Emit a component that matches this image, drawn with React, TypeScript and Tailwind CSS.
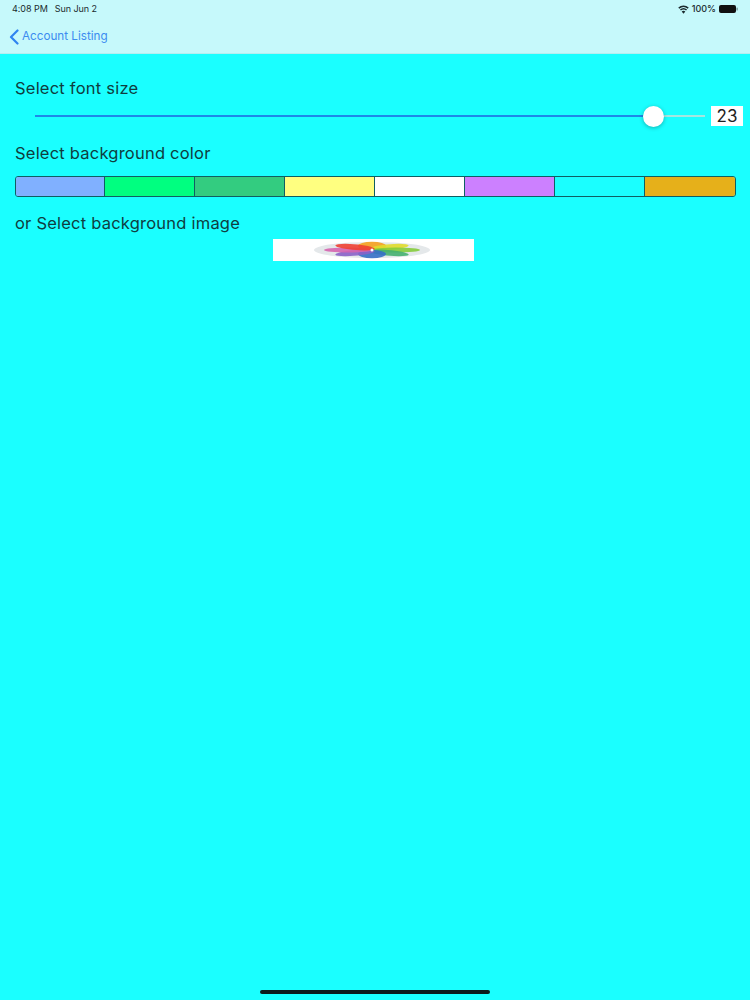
const swatches = [
  "w-[88px] bg-[#80b0ff]",
  "w-[90px] border-l bg-[#00ff80]",
  "w-[90px] border-l bg-[#33cc80]",
  "w-[90px] border-l bg-[#ffff80]",
  "w-[90px] border-l bg-white",
  "w-[90px] border-l bg-[#cc80ff]",
  "w-[90px] border-l bg-[#1affff]",
  "flex-1 border-l bg-[#e6b01a]",
];

const petals = [
  { angle: 0, color: "#f5a01f" },
  { angle: 45, color: "#e0dc2c" },
  { angle: 90, color: "#85cc3c" },
  { angle: 135, color: "#45b070" },
  { angle: 180, color: "#3570c8" },
  { angle: 225, color: "#8a62c8" },
  { angle: 270, color: "#d564b0" },
  { angle: 315, color: "#ee4032" },
];

export default function App() {
  return (
    <div className="relative w-[750px] h-[1000px] overflow-hidden bg-[#1affff] font-['Inter',sans-serif] text-[#0f3d40]">
      {/* Status + nav bar */}
      <header className="h-[54px] bg-[#c6f9fb] border-b border-[#b5eef0]">
        <div className="h-[18px] pl-3 pr-[12px] flex items-center justify-between text-[9px] text-[#1b2b2e]">
          <div className="flex gap-[7px] tracking-[-0.05px]">
            <span>4:08 PM</span>
            <span>Sun Jun 2</span>
          </div>
          <div className="flex items-center gap-[3px] font-medium">
            <svg width="11" height="9" viewBox="0 0 12 9" fill="#1b2b2e">
              <path d="M6 9 L4 6.6 A3.2 3.2 0 0 1 8 6.6 Z" />
              <path d="M3.2 5.7 L2.1 4.4 A6 6 0 0 1 9.9 4.4 L8.8 5.7 A4.4 4.4 0 0 0 3.2 5.7 Z" />
              <path d="M1.4 3.6 L0.3 2.3 A8.8 8.8 0 0 1 11.7 2.3 L10.6 3.6 A7.2 7.2 0 0 0 1.4 3.6 Z" />
            </svg>
            <span>100%</span>
            <svg width="19" height="8" viewBox="0 0 19 8">
              <rect x="0" y="0" width="17" height="8" rx="2" fill="#111" />
              <rect x="17.5" y="2.5" width="1.2" height="3" rx="0.6" fill="#6b8a8c" />
            </svg>
          </div>
        </div>
        <a className="ml-[9px] mt-[10px] flex items-center gap-[3px] text-[11.7px] text-[#3c8cf0]">
          <svg width="10" height="16" viewBox="0 0 10 16" fill="none" stroke="#2f84f0" strokeWidth="2.2" strokeLinecap="round" strokeLinejoin="round">
            <path d="M8.5 1.5 L2 8 L8.5 14.5" />
          </svg>
          Account Listing
        </a>
      </header>

      <main className="px-[15px]">
        <p className="mt-[24px] text-[16.5px] leading-5 tracking-[0.22px]">Select font size</p>

        {/* Font size slider */}
        <div className="mt-[6px] flex items-center h-6 w-[728px]">
          <div className="ml-5 w-[609px] h-[2px] bg-[#1e88e8]" />
          <div className="z-10 w-[21px] h-[21px] shrink-0 rounded-full bg-white shadow-[0_1px_4px_rgba(0,0,0,0.3)]" />
          <div className="w-[41px] h-[2px] bg-[#a5e6e0]" />
          <div className="ml-[6px] w-[32px] h-[20px] pt-px bg-white flex items-center justify-center text-[17px] text-[#222]">
            23
          </div>
        </div>

        <p className="mt-[15px] text-[16.5px] leading-5 tracking-[0.22px]">Select background color</p>

        {/* Color swatches */}
        <div className="mt-[13px] w-[721px] h-[21px] flex rounded-[3px] overflow-hidden border border-[#0f5f63]">
          {swatches.map((c) => (
            <div key={c} className={`shrink-0 border-[#0f5f63] ${c}`} />
          ))}
        </div>

        <p className="mt-[16px] text-[16.5px] leading-5 tracking-[0.22px]">or Select background image</p>

        {/* Squashed photo icon */}
        <div className="mt-[6px] ml-[258px] w-[201px] h-[22px] bg-white flex items-center justify-center overflow-hidden">
          <svg width="120" height="20" viewBox="-60 -10 120 20" className="mr-[3px] blur-[0.6px]">
            <ellipse cx="0" cy="0" rx="58" ry="8" fill="#e4e8ea" />
            <g transform="scale(1 0.17)">
              {petals.map((p) => (
                <ellipse
                  key={p.angle}
                  cx="0"
                  cy="-24"
                  rx="14"
                  ry="24"
                  fill={p.color}
                  fillOpacity="0.9"
                  transform={`rotate(${p.angle})`}
                />
              ))}
            </g>
            <circle cx="0" cy="0" r="1.5" fill="#ffffff" />
          </svg>
        </div>
      </main>

      {/* Home indicator */}
      <div className="absolute bottom-[6px] left-[260px] w-[230px] h-[4px] rounded-full bg-[#0a1a1c]" />
    </div>
  );
}
